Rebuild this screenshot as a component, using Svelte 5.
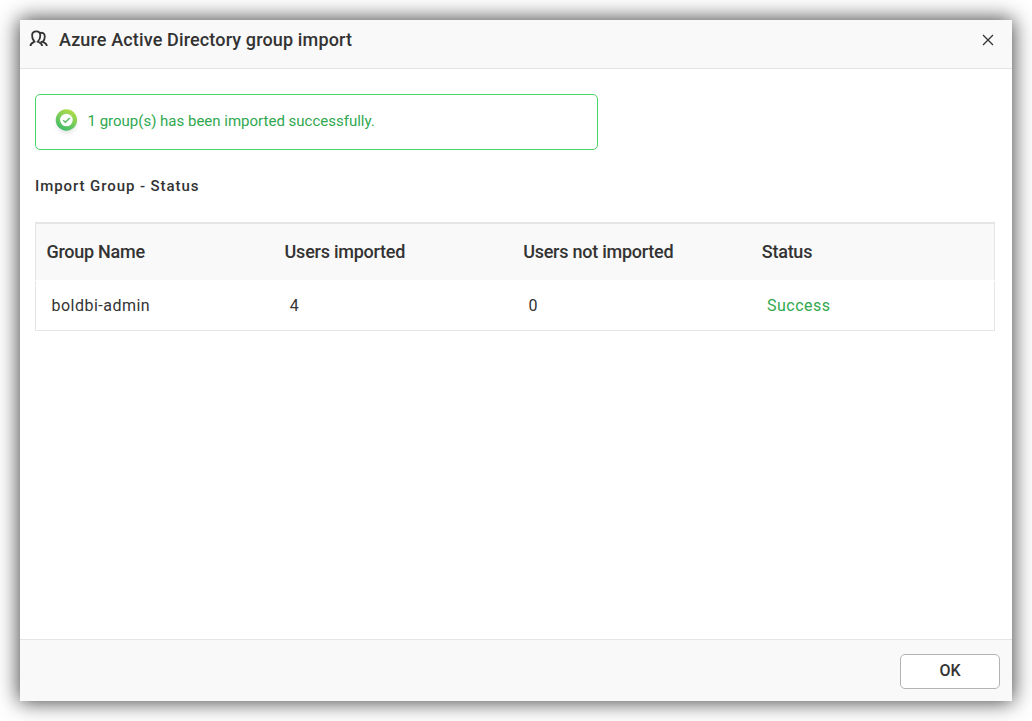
<script>
  const columns = ['Group Name', 'Users imported', 'Users not imported', 'Status'];
  const groups = [{ name: 'boldbi-admin', imported: 4, skipped: 0, status: 'Success' }];
</script>

<div class="page">
  <div class="dialog" role="dialog" aria-labelledby="title">
    <header>
      <svg class="people" width="20" height="20" viewBox="0 0 20 20" aria-hidden="true">
        <path d="M1.5 17C1.5 14.2 3.2 13.8 5.4 12.7C3.8 10.8 3 8.6 3.1 6.2C3.2 3.7 4.8 2.4 7.3 2.4C9.9 2.4 11.3 3.9 11.3 6.4C11.3 8.8 10.5 11 8.8 12.7C11.1 13.7 13.1 14.2 13.1 17" />
        <path d="M10.7 4C13.5 3.2 15.8 4.6 15.8 7.4C15.8 9.6 15.2 11.4 13.8 13C15.7 14 17.8 14.3 17.8 17M11.6 13.2L13.7 12.6" />
      </svg>
      <h1 id="title">Azure Active Directory group import</h1>
      <button class="close" aria-label="Close">
        <svg width="12" height="12" viewBox="0 0 12 12"><path d="M1 1L11 11M11 1L1 11" /></svg>
      </button>
    </header>
    <main>
      <div class="notice">
        <svg class="check" width="32" height="36" viewBox="0 0 32 36" aria-hidden="true">
          <defs>
            <linearGradient id="ring" x1="0.8" y1="0" x2="0.3" y2="1">
              <stop offset="0" stop-color="#b9df45" />
              <stop offset="1" stop-color="#3dbb6c" />
            </linearGradient>
            <filter id="soft" x="-50%" y="-50%" width="200%" height="200%"><feGaussianBlur stdDeviation="2.5" /></filter>
          </defs>
          <circle cx="16.4" cy="20" r="9.5" fill="#000" opacity=".11" filter="url(#soft)" />
          <circle cx="16.4" cy="16" r="10.7" fill="url(#ring)" />
          <circle cx="16.4" cy="16" r="6.3" fill="#fff" />
          <path d="M13.2 16.2L15.4 18.3L19.7 14" fill="none" stroke="#55bd60" stroke-width="1.3" />
        </svg>
        <span>1 group(s) has been imported successfully.</span>
      </div>
      <h2>Import Group - Status</h2>
      <table>
        <colgroup><col class="first" /><col /><col /><col class="last" /></colgroup>
        <thead><tr>{#each columns as column}<th>{column}</th>{/each}</tr></thead>
        <tbody>
          {#each groups as group}
            <tr>
              <td>{group.name}</td>
              <td>{group.imported}</td>
              <td>{group.skipped}</td>
              <td class="success">{group.status}</td>
            </tr>
          {/each}
        </tbody>
      </table>
    </main>
    <footer><button class="ok">OK</button></footer>
  </div>
</div>

<style>
  :global(body) { background: #fff; }
  .page, .page * { box-sizing: border-box; }
  .page {
    height: 721px;
    padding: 20px;
    overflow: hidden;
    font-family: Roboto, sans-serif;
    color: #333;
  }
  .dialog {
    display: flex;
    flex-direction: column;
    width: 992px;
    height: 681px;
    background: #fff;
    box-shadow: 0 0 20px 1px rgba(0, 0, 0, .75);
  }
  header {
    display: flex;
    align-items: center;
    flex: none;
    height: 49px;
    padding: 0 18px 9px 9px;
    background: #f9f9f9;
    border-bottom: 1px solid #e5e5e5;
  }
  svg { display: block; }
  .people { fill: none; stroke: #333; stroke-width: 1.8; margin-top: -2px; }
  h1 { margin: 0 auto 0 10px; font-size: 18px; font-weight: 500; line-height: 24px; letter-spacing: .14px; }
  button { font-family: inherit; color: inherit; padding: 0; }
  .close { border: 0; background: none; margin-top: 1px; }
  .close path { stroke: #333; stroke-width: 1.3; }
  main { flex: 1; padding: 25px 17px 0 15px; }
  .notice {
    display: flex;
    width: 563px;
    height: 56px;
    padding: 9px 0 0 14px;
    border: 1px solid #4bd763;
    border-radius: 5px;
    color: #2fa84f;
    font-size: 15px;
    line-height: 34px;
  }
  .notice span { margin-left: 5.5px; }
  h2 { margin: 26px 0 0; font-size: 15px; font-weight: 500; line-height: 20px; letter-spacing: .92px; }
  table {
    width: 960px;
    margin-top: 26px;
    table-layout: fixed;
    border-collapse: separate;
    border-spacing: 0;
    border: solid #e5e5e5;
    border-width: 2px 0 1px;
    text-align: left;
  }
  col { width: 238.6px; }
  col.first { width: 239px; }
  col.last { width: auto; }
  th { height: 57px; padding: 0 0 2px 10.6px; background: #f9f9f9; border-bottom: 1px solid #fff; font-size: 18px; font-weight: 500; letter-spacing: -.25px; }
  td { height: 49px; padding: 0 0 0 15.8px; font-size: 16px; letter-spacing: .5px; }
  th:first-child { padding-left: 11.4px; }
  td:first-child { padding-left: 16.4px; }
  th:first-child, td:first-child { box-shadow: inset 1px 0 #e5e5e5; }
  th:last-child, td:last-child { box-shadow: inset -1px 0 #e5e5e5; }
  td.success { color: #2fa84f; }
  footer {
    display: flex;
    justify-content: flex-end;
    flex: none;
    height: 62px;
    padding: 14px 12px 0;
    background: #f9f9f9;
    border-top: 1px solid #e5e5e5;
  }
  .ok { width: 100px; height: 35px; padding-bottom: 2px; border: 1px solid #b3b3b3; border-radius: 5px; background: #fff; font-size: 16px; font-weight: 500; }
</style>
